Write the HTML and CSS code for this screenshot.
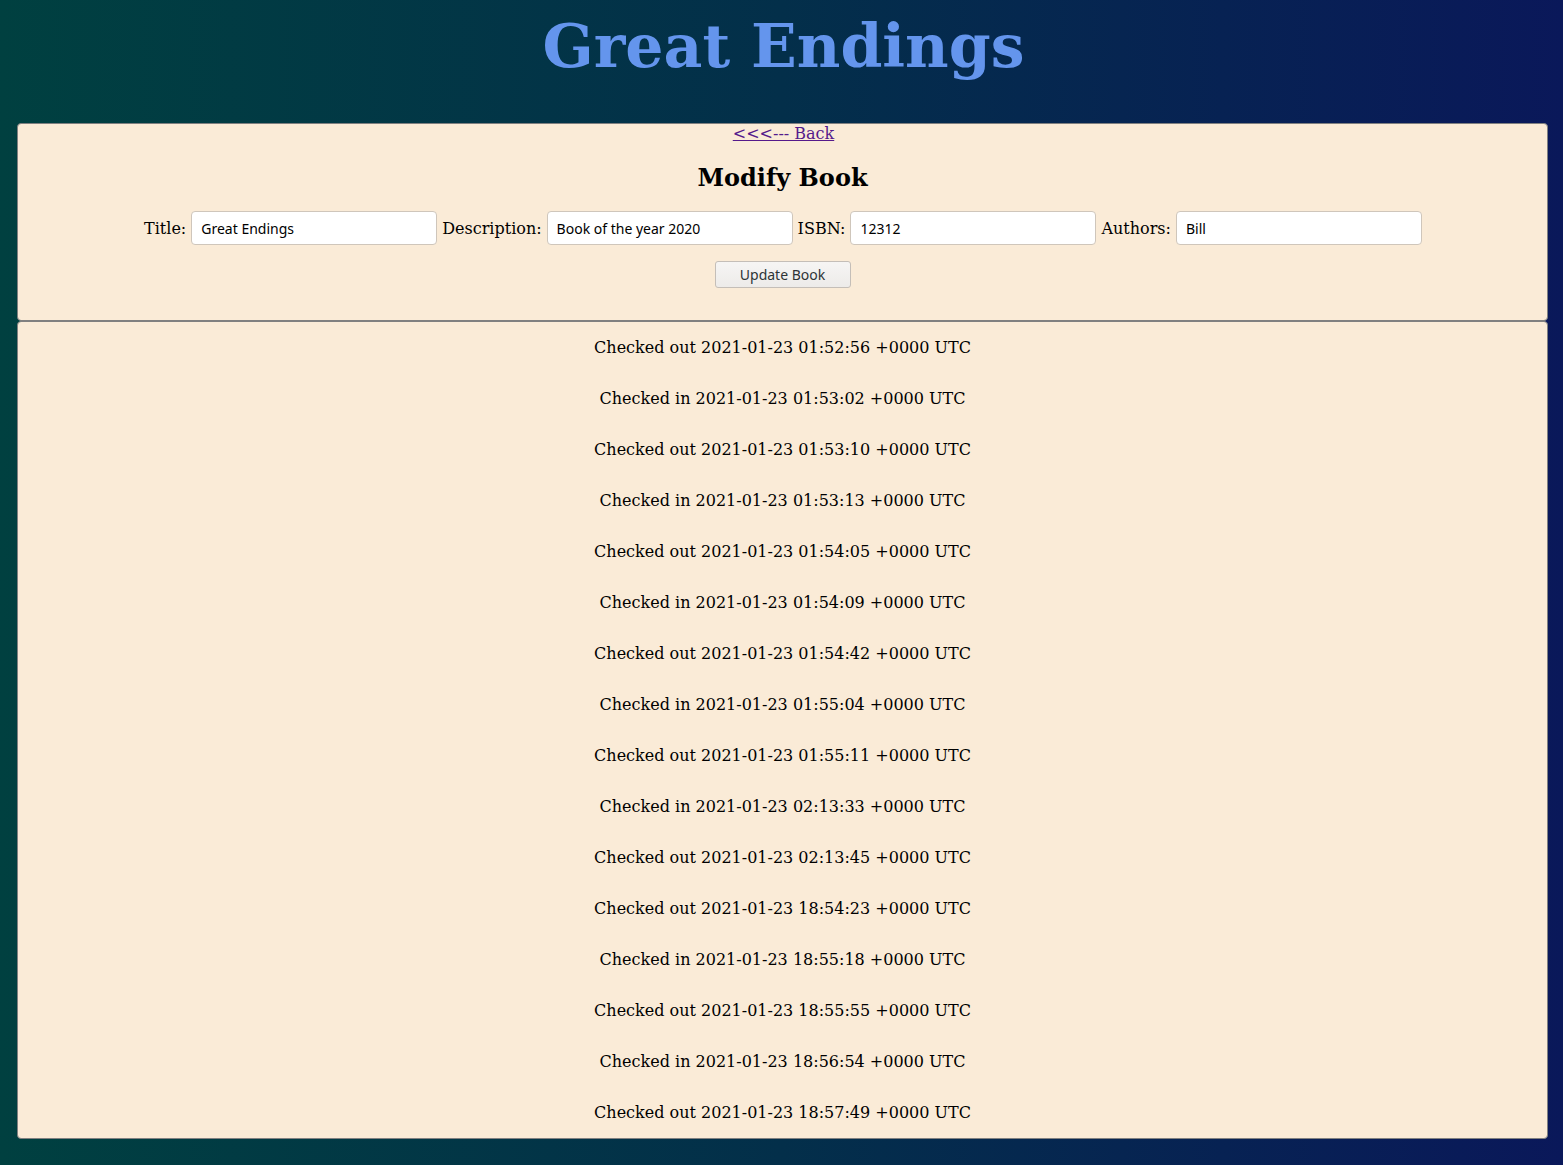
FILE: index.html
```html
<!DOCTYPE html>
<html>
<head>
<meta charset="utf-8">
<title>Great Endings</title>
<link rel="stylesheet" href="styles.css">
</head>
<body>
<h1 class="site-title">Great Endings</h1>
<div class="panel edit-panel">
  <div class="back"><a href="#" class="back-link">&lt;&lt;&lt;--- Back</a></div>
  <h2 class="panel-title">Modify Book</h2>
  <form class="book-form">
    <div class="fields">
      <label>Title:</label>
      <input class="field" type="text" value="Great Endings">
      <label>Description:</label>
      <input class="field" type="text" value="Book of the year 2020">
      <label>ISBN:</label>
      <input class="field" type="text" value="12312">
      <label>Authors:</label>
      <input class="field" type="text" value="Bill">
    </div>
    <div class="actions"><button type="button" class="btn">Update Book</button></div>
  </form>
</div>
<div class="panel history">
  <p>Checked out 2021-01-23 01:52:56 +0000 UTC</p>
  <p>Checked in 2021-01-23 01:53:02 +0000 UTC</p>
  <p>Checked out 2021-01-23 01:53:10 +0000 UTC</p>
  <p>Checked in 2021-01-23 01:53:13 +0000 UTC</p>
  <p>Checked out 2021-01-23 01:54:05 +0000 UTC</p>
  <p>Checked in 2021-01-23 01:54:09 +0000 UTC</p>
  <p>Checked out 2021-01-23 01:54:42 +0000 UTC</p>
  <p>Checked in 2021-01-23 01:55:04 +0000 UTC</p>
  <p>Checked out 2021-01-23 01:55:11 +0000 UTC</p>
  <p>Checked in 2021-01-23 02:13:33 +0000 UTC</p>
  <p>Checked out 2021-01-23 02:13:45 +0000 UTC</p>
  <p>Checked out 2021-01-23 18:54:23 +0000 UTC</p>
  <p>Checked in 2021-01-23 18:55:18 +0000 UTC</p>
  <p>Checked out 2021-01-23 18:55:55 +0000 UTC</p>
  <p>Checked in 2021-01-23 18:56:54 +0000 UTC</p>
  <p>Checked out 2021-01-23 18:57:49 +0000 UTC</p>
</div>
</body>
</html>
```
FILE: styles.css
```css
html {
  min-height: 100%;
  background: linear-gradient(to right, #004040 0%, #032f4a 50%, #0a185a 100%);
}
body {
  margin: 0;
  padding: 8px 0 0 0;
  min-height: 1157px;
  font-family: "DejaVu Serif", serif;
  font-size: 16px;
  color: #000;
}
.site-title {
  margin: 0 0 39px 0;
  padding-left: 4px;
  text-align: center;
  font-size: 60px;
  line-height: 76px;
  font-weight: bold;
  color: #6495ed;
}
.panel {
  margin: 0 15px 0 17px;
  background: #faebd7;
  border: 1px solid #808080;
  border-radius: 4px;
  text-align: center;
}
.edit-panel {
  padding-bottom: 32px;
}
.back {
  padding-left: 2px;
}
.back-link {
  color: #551a8b;
}
.panel-title {
  margin: 20px 0 19px 0;
  font-size: 24px;
}
.fields {
  display: flex;
  justify-content: center;
  align-items: center;
  gap: 5px;
  padding-left: 1px;
}
.field {
  box-sizing: border-box;
  width: 246px;
  height: 34px;
  margin: 0;
  padding: 0 9px;
  border: 1px solid #cfc6bb;
  border-radius: 4px;
  background: #fff;
  font-family: "Noto Sans", sans-serif;
  font-size: 14px;
  color: #000;
}
.actions {
  margin-top: 16px;
}
.btn {
  box-sizing: border-box;
  width: 136px;
  height: 27px;
  border: 1px solid #c4beb8;
  border-radius: 3px;
  background: linear-gradient(#f6f5f4, #edebe9);
  font-family: "Noto Sans", sans-serif;
  font-size: 14px;
  color: #2e3436;
}
.history {
  display: flex;
  flex-direction: column;
  align-items: center;
}
.history p {
  margin: 16px 0;
}
```
